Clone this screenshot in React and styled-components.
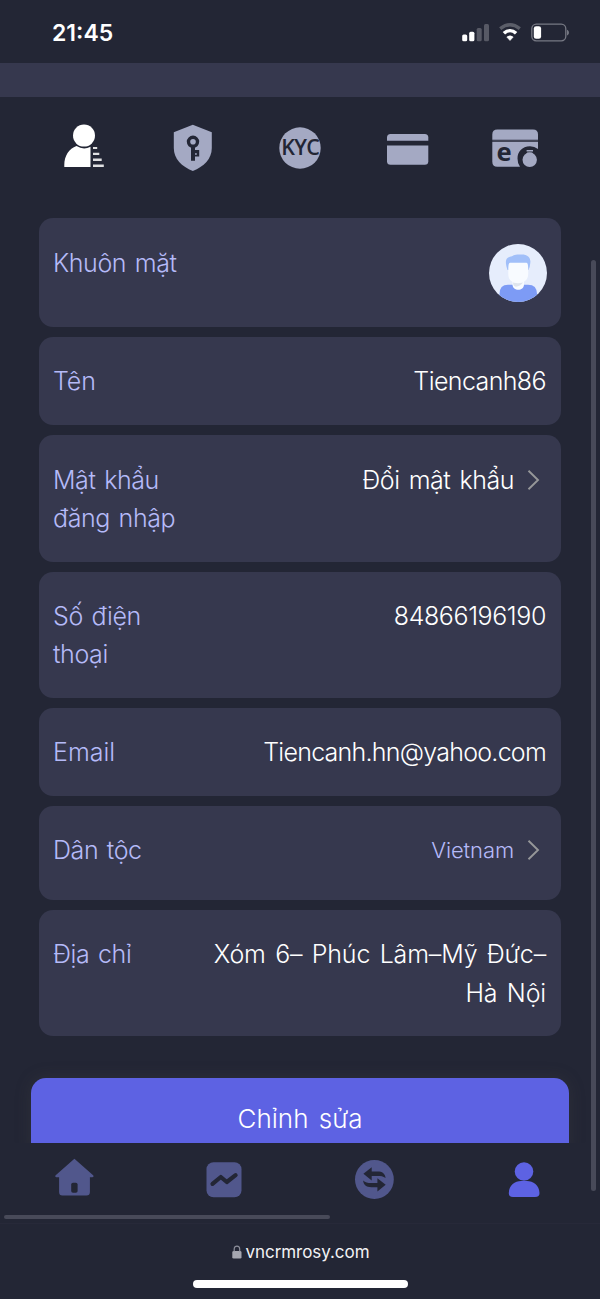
import React from 'react';
import styled, { createGlobalStyle } from 'styled-components';

const GlobalStyle = createGlobalStyle`
  * {
    box-sizing: border-box;
  }

  body {
    margin: 0;
    background: #232635;
    font-family: Inter, 'Noto Sans', sans-serif;
  }
`;

// css
const PageStyled = styled.div`
  position: relative;
  display: flex;
  flex-direction: column;
  width: 600px;
  height: 1299px;
  overflow: hidden;
  background: #232635;
`;
const StatusBarStyled = styled.header`
  display: flex;
  flex: none;
  align-items: center;
  justify-content: space-between;
  height: 63px;
  padding: 3px 30px 0 52px;
  color: #fff;
`;
const TimeStyled = styled.span`
  font-size: 23px;
  font-weight: 600;
  line-height: 28px;
  letter-spacing: 0;
`;
const BandStyled = styled.div`
  flex: none;
  height: 34px;
  background: #36384e;
`;
const TabsStyled = styled.nav`
  display: grid;
  flex: none;
  grid-template-columns: repeat(5, 108px);
  justify-content: center;
  height: 121px;
  padding-top: 21px;
`;
const TabStyled = styled.a`
  display: flex;
  justify-content: center;
  height: 60px;
  color: ${({ $active }) => ($active ? '#fff' : '#a4a9c3')};
`;
const ContentStyled = styled.main`
  flex: 1;
  min-height: 0;
  overflow: hidden;
`;
const CardListStyled = styled.div`
  display: flex;
  flex-direction: column;
  gap: 10px;
  padding: 0.25px 39px 0;
`;
const CardStyled = styled.section`
  display: flex;
  align-items: flex-start;
  justify-content: space-between;
  min-height: ${({ $height }) => $height || 88.4}px;
  padding: 25.3px 15px 24.7px 14px;
  border-radius: 14px;
  background: #36384e;
  font-size: 25px;
  font-weight: 350;
  line-height: 38.1px;
`;
const LabelStyled = styled.div`
  width: 136px;
  color: #b5baf8;
  letter-spacing: ${({ $spacing }) => $spacing ?? -0.4}px;
  word-spacing: 2px;
`;
const ValueStyled = styled.div`
  flex: 1;
  color: ${({ $muted }) => ($muted ? '#b5baf8' : '#fff')};
  font-size: ${({ $muted }) => ($muted ? 22 : 25)}px;
  letter-spacing: ${({ $spacing }) => $spacing || 0}px;
  word-spacing: 2.5px;
  text-align: right;
  white-space: pre-line;
`;
const ChevronStyled = styled.svg`
  flex: none;
  width: 13px;
  height: 22px;
  margin: 8px 6px 0 13px;
`;
const AvatarStyled = styled.svg`
  flex: none;
  width: 58px;
  height: 58px;
  margin-right: -1px;
`;
const EditButtonStyled = styled.button`
  display: block;
  width: 538px;
  height: 82px;
  margin: 41.4px auto 0;
  padding: 0;
  border: 0;
  border-radius: 15px;
  background: #5d62e3;
  box-shadow: 0 0 16px rgba(80, 75, 70, 0.25);
  color: #fff;
  font-family: inherit;
  font-size: 26px;
  font-weight: 350;
  letter-spacing: 0;
  word-spacing: 3px;
`;
const BottomNavStyled = styled.nav`
  display: grid;
  flex: none;
  grid-template-columns: repeat(4, 1fr);
  height: 80px;
  padding-top: 14px;
  background: #232635;
`;
const NavItemStyled = styled.a`
  display: flex;
  justify-content: center;
  padding-right: 2px;
  color: ${({ $active }) => ($active ? '#5d62e3' : '#51578c')};
`;
const AddressBarStyled = styled.footer`
  display: flex;
  flex: none;
  flex-direction: column;
  align-items: center;
  height: 76px;
  padding-top: 17px;
  border-top: 1px solid #272939;
`;
const UrlStyled = styled.div`
  display: flex;
  align-items: center;
  gap: 3px;
  height: 21px;
  padding-left: 2px;
  color: #f2f2f4;
  font-size: 17px;
  letter-spacing: -0.05px;
`;
const HomeIndicatorStyled = styled.div`
  width: 215px;
  height: 8px;
  margin-top: 18px;
  border-radius: 4px;
  background: #fff;
`;
// overlay scrollbars sit on top of the page
const ScrollbarYStyled = styled.div`
  position: absolute;
  top: 260px;
  right: 4px;
  width: 5px;
  height: 931px;
  border-radius: 3px;
  background: #484a59;
`;
const ScrollbarXStyled = styled.div`
  position: absolute;
  top: 1215px;
  left: 4px;
  width: 326px;
  height: 4px;
  border-radius: 2px;
  background: #484a59;
`;

const DARK = '#232635';

const StatusIcons = () => (
  <svg width="108" height="20" viewBox="0 0 108 20" fill="#fff">
    <rect x="0.2" y="11.5" width="5" height="6.7" rx="1.5" />
    <rect x="7.2" y="8.8" width="5.2" height="9.4" rx="1.5" />
    <rect x="14.7" y="5" width="5" height="13.2" rx="1.5" opacity="0.24" />
    <rect x="22" y="1" width="5" height="17.2" rx="1.5" opacity="0.24" />
    <path
      d="M38.2 5.7C44.5 0.7 51.5 0.7 57.8 5.7"
      fill="none"
      stroke="#fff"
      strokeWidth="3.4"
      opacity="0.26"
    />
    <path
      d="M41.9 10.3C45.6 6.8 50.4 6.8 54.1 10.3"
      fill="none"
      stroke="#fff"
      strokeWidth="3.5"
    />
    <path d="M44.8 14Q48 11.6 51.2 14L48 17.5Z" stroke="#fff" strokeWidth="0.6" />
    <rect
      x="69.8"
      y="1.2"
      width="34"
      height="16.6"
      rx="4.5"
      fill="none"
      stroke="#777984"
      strokeWidth="1.3"
    />
    <rect x="71.8" y="3.3" width="7.3" height="12.5" rx="2.3" />
    <path d="M105.2 6.7C107.3 7.7 107.3 11.5 105.2 12.5Z" fill="#888a94" />
  </svg>
);

const ProfileIcon = () => (
  <svg width="48" height="60" viewBox="0 0 48 60" fill="currentColor">
    <circle cx="24" cy="17.6" r="11" />
    <path d="M4.3 49V47C4.3 38 9 30.5 16.5 28Q23.5 32.5 30.5 28.8V49Z" />
    <path
      d="M33 29H37.2V31H33ZM33 34.7H39.3V37H33ZM33 40.6H41.7V43H33ZM33 46.5H43.8V49H33Z"
      opacity="0.86"
    />
  </svg>
);

const SecurityIcon = () => (
  <svg width="48" height="60" viewBox="-0.8 0 48 60" fill="currentColor">
    <path d="M24 6.7L43 14.2V30C43 41 35 48.5 24 53C13 48.5 5 41 5 30V14.2Z" />
    <circle cx="24.2" cy="23.8" r="4.5" fill="none" stroke={DARK} strokeWidth="3.4" />
    <path d="M22.2 28H26.2V32H30.4V38.5H26.2V42.8H22.2Z" fill={DARK} />
    <path d="M26.2 35.2H28V36.8H26.2Z" />
  </svg>
);

const KycIcon = () => (
  <svg width="48" height="60" viewBox="0 0 48 60" fill="currentColor">
    <circle cx="24" cy="30" r="20.7" />
    <text
      x="5.2"
      y="37"
      fill={DARK}
      fontFamily="Open Sans, sans-serif"
      fontSize="21.5"
      fontWeight="600"
      letterSpacing="-0.7"
    >
      KYC
    </text>
  </svg>
);

const CardIcon = () => (
  <svg width="48" height="60" viewBox="0 0 48 60" fill="currentColor">
    <path d="M3 22.8V19.5Q3 16 6.5 16H40.8Q44.3 16 44.3 19.5V22.8Z" />
    <path d="M3 27.5H44.3V43.2Q44.3 46.7 40.8 46.7H6.5Q3 46.7 3 43.2Z" />
  </svg>
);

const WalletIcon = () => (
  <svg width="48" height="60" viewBox="1 0 48 60" fill="currentColor">
    <path d="M1.3 21.8V16.5Q1.3 11.5 6.3 11.5H42Q47 11.5 47 16.5V21.8Z" />
    <path d="M1.3 21.8H47V24H1.3Z" opacity="0.25" />
    <path d="M1.3 24H47V31Q43.5 28.3 39 28.3C31 28.3 26.5 34 26.5 40.5Q26.5 45.7 29 48.7H6.3Q1.3 48.7 1.3 43.7Z" />
    <text
      x="13.1"
      y="42.6"
      fill={DARK}
      fontFamily="Noto Sans, sans-serif"
      fontSize="25.5"
      fontWeight="700"
      textAnchor="middle"
    >
      e
    </text>
    <circle cx="38.7" cy="41.8" r="7.2" />
    <path d="M35.6 32H42V33.6H35.6ZM36.2 34.4H41.2L42 36.5H35.4Z" />
  </svg>
);

const Avatar = () => (
  <AvatarStyled viewBox="0 0 58 58">
    <defs>
      <clipPath id="avatar-clip">
        <circle cx="29" cy="29" r="29" />
      </clipPath>
    </defs>
    <g clipPath="url(#avatar-clip)">
      <rect width="58" height="58" fill="#e6edfc" />
      <path d="M10.5 58V50Q10.5 40.7 19 40.7H39Q48 40.7 48 50V58Z" fill="#7d9bf5" />
      <path d="M23.5 36H35V40.5C35 47.5 23.5 47.5 23.5 40.5Z" fill="#f8fbff" />
      <path d="M24 38.5H34Q31 42.5 27 42.7Q24 42.4 24 38.5Z" fill="#dfe5ee" />
      <path
        d="M18.5 26C16.5 20 16.2 16 18.5 14Q20.5 12.5 23 12.3C26 10 29 10.5 33 10.4C39 10.4 42 14 41.3 19Q41 23 39.5 26Z"
        fill="#a1bff9"
      />
      <path
        d="M19.3 24C19.6 21 19.6 18.8 21 18.8H37.5C38.9 18.8 38.9 21 39.2 24V30C39.2 36 35 39.2 29 39.2C23 39.2 19.3 36 19.3 30Z"
        fill="#f8fbff"
      />
    </g>
  </AvatarStyled>
);

const Chevron = () => (
  <ChevronStyled viewBox="0 0 13 22" fill="none" stroke="#969799" strokeWidth="1.9">
    <path d="M1.5 1.7L11 11L1.5 20.3" />
  </ChevronStyled>
);

const HomeIcon = () => (
  <svg width="42" height="44" viewBox="-0.4 0 42 44" fill="currentColor">
    <path d="M21 1.7L40 18.4Q40.7 19.9 39 20.2H36.5V35Q36.5 38.5 33 38.5H9Q5.7 38.5 5.7 35V20.2H3Q1.3 19.9 2 18.4Z" />
    <rect x="17.8" y="25.8" width="6.4" height="10" rx="1.8" fill={DARK} />
  </svg>
);

const ChartIcon = () => (
  <svg width="42" height="44" viewBox="0 0 42 44" fill="currentColor">
    <rect x="3.5" y="5.2" width="35" height="35" rx="7" />
    <path
      d="M9.5 26.8L17.8 20L23.8 25L32.6 18.2"
      fill="none"
      stroke={DARK}
      strokeWidth="4.2"
      strokeLinecap="round"
      strokeLinejoin="round"
    />
  </svg>
);

const ExchangeIcon = () => (
  <svg width="42" height="44" viewBox="-0.4 0 42 44" fill="currentColor">
    <circle cx="21" cy="22.5" r="19.4" />
    <path
      d="M10 16.7L18.3 10.2V14.6H24C29 14.6 31.5 16.5 32.2 21C29.7 18.9 27.5 18.9 24 18.9H18.3V23.4Z"
      fill={DARK}
    />
    <path
      d="M32.3 27.7L24 34.6V30.2H18C12.7 30.2 10.2 28 9.7 23.5C12 25.7 14 26 18 26H24V21.2Z"
      fill={DARK}
    />
  </svg>
);

const UserIcon = () => (
  <svg width="42" height="44" viewBox="0 0 42 44" fill="currentColor">
    <circle cx="21" cy="14.5" r="9.3" />
    <path d="M5.8 36C6 28 12 24 18 24H24C30 24 36.3 28 36.5 36Q36.7 40 32 40H10Q5.6 40 5.8 36Z" />
  </svg>
);

const LockIcon = () => (
  <svg width="10" height="14" viewBox="0 0 10 14">
    <rect x="0.3" y="6" width="9.2" height="7.6" rx="1.4" fill="#a5a6b0" />
    <path d="M2.2 6.5V4C2.2 0.1 7.7 0.1 7.7 4V6.5" fill="none" stroke="#8d8f9b" strokeWidth="1.2" />
  </svg>
);

const tabs = [
  { key: 'profile', Icon: ProfileIcon },
  { key: 'security', Icon: SecurityIcon },
  { key: 'kyc', Icon: KycIcon },
  { key: 'card', Icon: CardIcon },
  { key: 'wallet', Icon: WalletIcon },
];

const rows = [
  { label: 'Tên', value: 'Tiencanh86', spacing: -0.6, labelSpacing: -0.1 },
  { label: 'Mật khẩu đăng nhập', value: 'Đổi mật khẩu', spacing: -0.45, link: true },
  { label: 'Số điện thoại', value: '84866196190', spacing: -0.4 },
  { label: 'Email', value: 'Tiencanh.hn@yahoo.com', spacing: -0.75, labelSpacing: 0 },
  { label: 'Dân tộc', value: 'Vietnam', spacing: -0.1, link: true, muted: true, height: 94 },
  { label: 'Địa chỉ', value: 'Xóm 6– Phúc Lâm–Mỹ Đức–\nHà Nội', spacing: -0.15 },
];

const navItems = [
  { key: 'home', Icon: HomeIcon },
  { key: 'market', Icon: ChartIcon },
  { key: 'exchange', Icon: ExchangeIcon },
  { key: 'user', Icon: UserIcon },
];

const App = () => {
  return (
    <PageStyled>
      <GlobalStyle />
      <StatusBarStyled>
        <TimeStyled>21:45</TimeStyled>
        <StatusIcons />
      </StatusBarStyled>
      <BandStyled />
      <TabsStyled>
        {tabs.map(({ key, Icon }) => (
          <TabStyled key={key} $active={key === 'profile'}>
            <Icon />
          </TabStyled>
        ))}
      </TabsStyled>
      <ContentStyled>
        <CardListStyled>
          <CardStyled $height={108.8}>
            <LabelStyled>Khuôn mặt</LabelStyled>
            <Avatar />
          </CardStyled>
          {rows.map((row) => (
            <CardStyled key={row.label} $height={row.height}>
              <LabelStyled $spacing={row.labelSpacing}>{row.label}</LabelStyled>
              <ValueStyled $muted={row.muted} $spacing={row.spacing}>
                {row.value}
              </ValueStyled>
              {row.link && <Chevron />}
            </CardStyled>
          ))}
        </CardListStyled>
        <EditButtonStyled type="button">Chỉnh sửa</EditButtonStyled>
      </ContentStyled>
      <BottomNavStyled>
        {navItems.map(({ key, Icon }) => (
          <NavItemStyled key={key} $active={key === 'user'}>
            <Icon />
          </NavItemStyled>
        ))}
      </BottomNavStyled>
      <AddressBarStyled>
        <UrlStyled>
          <LockIcon />
          vncrmrosy.com
        </UrlStyled>
        <HomeIndicatorStyled />
      </AddressBarStyled>
      <ScrollbarYStyled />
      <ScrollbarXStyled />
    </PageStyled>
  );
};

export default App;
